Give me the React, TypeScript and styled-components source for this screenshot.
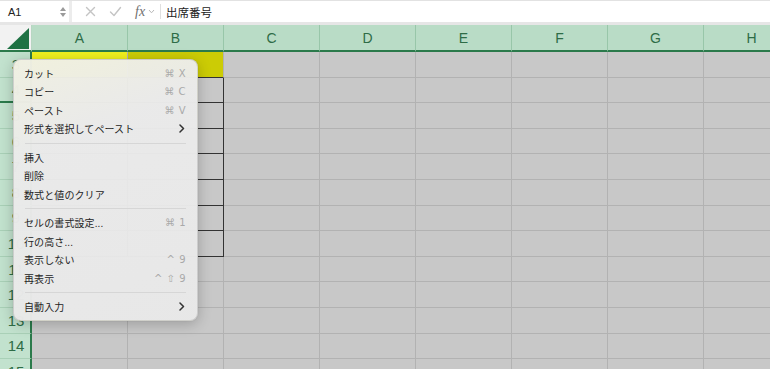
import React from 'react'
import styled, { createGlobalStyle } from 'styled-components'

const GlobalStyle = createGlobalStyle`
  html, body {
    margin: 0;
    padding: 0;
    background: #ffffff;
    overflow: hidden;
  }
  * { box-sizing: border-box; }
`

const JP = `"Liberation Sans", "Noto Sans CJK JP", "DejaVu Sans", sans-serif`

const COLUMNS = ['A', 'B', 'C', 'D', 'E', 'F', 'G', 'H']
const ROW_COUNT = 13
const FIRST_ROW = 3

const Page = styled.div`
  width: 770px;
  height: 369px;
  overflow: hidden;
  position: relative;
  background: #ececec;
  font-family: ${JP};
`

const FormulaBar = styled.div`
  height: 25px;
  display: flex;
  align-items: stretch;
  border-top: 1px solid #e2e2e2;
  border-bottom: 3px solid #e6e6e6;
  background: #ffffff;
`

const NameBox = styled.div`
  width: 72px;
  display: flex;
  align-items: center;
  justify-content: space-between;
  padding: 0 3px 0 8px;
  font-size: 11px;
  color: #222;
  border-right: 3px solid #ececec;
`

const Spinner = styled.div`
  display: flex;
  flex-direction: column;
  gap: 2px;
`

const Tri = styled.div<{ up?: boolean }>`
  width: 0;
  height: 0;
  border-left: 3px solid transparent;
  border-right: 3px solid transparent;
  ${({ up }) => up ? 'border-bottom: 4px solid #9a9a9a;' : 'border-top: 4px solid #9a9a9a;'}
`

const Tools = styled.div`
  display: flex;
  align-items: center;
  gap: 13px;
  padding: 0 5px 0 13px;
  border-right: 1px solid #e0e0e0;
  margin: 3px 0;
`

const Fx = styled.span`
  font-family: "Liberation Serif", serif;
  font-style: italic;
  font-size: 14px;
  color: #6f6f6f;
  display: flex;
  align-items: center;
  gap: 3px;
`

const FormulaText = styled.div`
  display: flex;
  align-items: center;
  padding-left: 5px;
  font-size: 11.5px;
  color: #1c1c1c;
`

const Sheet = styled.div`
  display: grid;
  grid-template-columns: 32px repeat(8, 96px);
  grid-auto-rows: 25.6px;
  grid-template-rows: 27px;
`

const Corner = styled.div`
  background: #f2f2f2;
  border-bottom: 2px solid #2b7a4b;
  border-right: 1px solid #b7d6c2;
  position: relative;
`

const ColHead = styled.div`
  background: #b9dcc6;
  color: #2e6c46;
  font-family: "Liberation Sans", sans-serif;
  font-size: 14px;
  display: flex;
  align-items: center;
  justify-content: center;
  border-right: 1px solid #98c6a9;
  border-bottom: 2px solid #2b7a4b;
`

const RowHead = styled.div<{ $mark?: boolean }>`
  background: #c2e2ce;
  color: #2e6c46;
  font-family: "Liberation Sans", sans-serif;
  font-size: 15px;
  display: flex;
  align-items: center;
  justify-content: center;
  padding-left: 2px;
  border-right: 2px solid #2b7a4b;
  border-bottom: ${({ $mark }) => $mark ? '2px solid #2b7a4b' : '1px solid #a9d0b7'};
`

const Cell = styled.div<{ $fill?: string; $right?: boolean; $bottom?: boolean }>`
  background: ${({ $fill }) => $fill || '#c8c8c8'};
  border-right: 1px solid ${({ $right }) => $right ? '#333' : '#b2b2b2'};
  border-bottom: 1px solid ${({ $bottom }) => $bottom ? '#333' : '#b2b2b2'};
`

const Menu = styled.div`
  position: absolute;
  left: 13px;
  top: 59px;
  width: 185px;
  padding: 4px 0;
  border-radius: 8px;
  background: linear-gradient(160deg, rgba(240, 240, 226, 0.98) 0%, rgba(234, 234, 234, 0.98) 30%, rgba(232, 232, 232, 0.98) 100%);
  border: 0.5px solid rgba(0, 0, 0, 0.12);
  box-shadow: 0 3px 14px rgba(0, 0, 0, 0.22), 0 0 1px rgba(0, 0, 0, 0.2);
`

const Item = styled.div`
  height: 18.5px;
  display: flex;
  align-items: center;
  justify-content: space-between;
  padding: 0 11px 0 10px;
  font-size: 10px;
  letter-spacing: 0.1px;
  color: #242424;
`

const Shortcut = styled.span`
  font-family: "DejaVu Sans", sans-serif;
  font-size: 10px;
  color: #a9a9a9;
  letter-spacing: 0.5px;
`

const Chevron = styled.span`
  display: flex;
  align-items: center;
  padding-right: 1px;
`

const Separator = styled.div`
  height: 10px;
  display: flex;
  align-items: center;
  padding: 0 11px;

  &::after {
    content: '';
    flex: 1;
    height: 1px;
    background: #d6d6d6;
  }
`

type MenuEntry = { label: string; key?: string; sub?: boolean } | 'sep'

const MENU: MenuEntry[] = [
  { label: 'カット', key: '⌘ X' },
  { label: 'コピー', key: '⌘ C' },
  { label: 'ペースト', key: '⌘ V' },
  { label: '形式を選択してペースト', sub: true },
  'sep',
  { label: '挿入' },
  { label: '削除' },
  { label: '数式と値のクリア' },
  'sep',
  { label: 'セルの書式設定...', key: '⌘ 1' },
  { label: '行の高さ...' },
  { label: '表示しない', key: '^ 9' },
  { label: '再表示', key: '^ ⇧ 9' },
  'sep',
  { label: '自動入力', sub: true },
]

const ChevronIcon = () => (
  <svg width="6" height="9" viewBox="0 0 6 9">
    <path d="M1 1 L4.5 4.5 L1 8" fill="none" stroke="#333" strokeWidth="1.5" strokeLinecap="round" strokeLinejoin="round" />
  </svg>
)

const CornerTriangle = () => (
  <svg width="32" height="25" viewBox="0 0 32 25" style={{ position: 'absolute', left: 0, top: 0 }}>
    <polygon points="7,24 29,24 29,3" fill="#1f7244" />
  </svg>
)

const cellFill = (row: number, col: number) => {
  if (row === 0 && col === 0) return '#f0f01e'
  if (row === 0 && col === 1) return '#cccc05'
  return undefined
}

const App = () => {
  return (
    <Page>
      <GlobalStyle />
      <FormulaBar>
        <NameBox>
          A1
          <Spinner>
            <Tri up />
            <Tri />
          </Spinner>
        </NameBox>
        <Tools>
          <svg width="11" height="11" viewBox="0 0 11 11">
            <path d="M1.5 1.5 L9.5 9.5 M9.5 1.5 L1.5 9.5" stroke="#c4c4c4" strokeWidth="1.4" strokeLinecap="round" />
          </svg>
          <svg width="13" height="11" viewBox="0 0 13 11">
            <path d="M1.5 6 L5 9.5 L11.5 1.5" fill="none" stroke="#c4c4c4" strokeWidth="1.4" strokeLinecap="round" strokeLinejoin="round" />
          </svg>
          <Fx>
            fx
            <svg width="7" height="5" viewBox="0 0 7 5">
              <path d="M1 1 L3.5 3.8 L6 1" fill="none" stroke="#b8b8b8" strokeWidth="1" />
            </svg>
          </Fx>
        </Tools>
        <FormulaText>出席番号</FormulaText>
      </FormulaBar>

      <Sheet>
        <Corner>
          <CornerTriangle />
        </Corner>
        {COLUMNS.map(c => <ColHead key={c}>{c}</ColHead>)}
        {Array.from({ length: ROW_COUNT }).map((_, r) => (
          <React.Fragment key={r}>
            <RowHead $mark={r === 1}>{r + FIRST_ROW}</RowHead>
            {COLUMNS.map((c, ci) => {
              const inTable = ci < 2 && r <= 7
              return (
                <Cell
                  key={c}
                  $fill={cellFill(r, ci)}
                  $right={inTable && r > 0}
                  $bottom={inTable}
                />
              )
            })}
          </React.Fragment>
        ))}
      </Sheet>

      <Menu>
        {MENU.map((m, i) =>
          m === 'sep' ? (
            <Separator key={i} />
          ) : (
            <Item key={i}>
              <span>{m.label}</span>
              {m.key && <Shortcut>{m.key}</Shortcut>}
              {m.sub && <Chevron><ChevronIcon /></Chevron>}
            </Item>
          )
        )}
      </Menu>
    </Page>
  )
}

export default App
